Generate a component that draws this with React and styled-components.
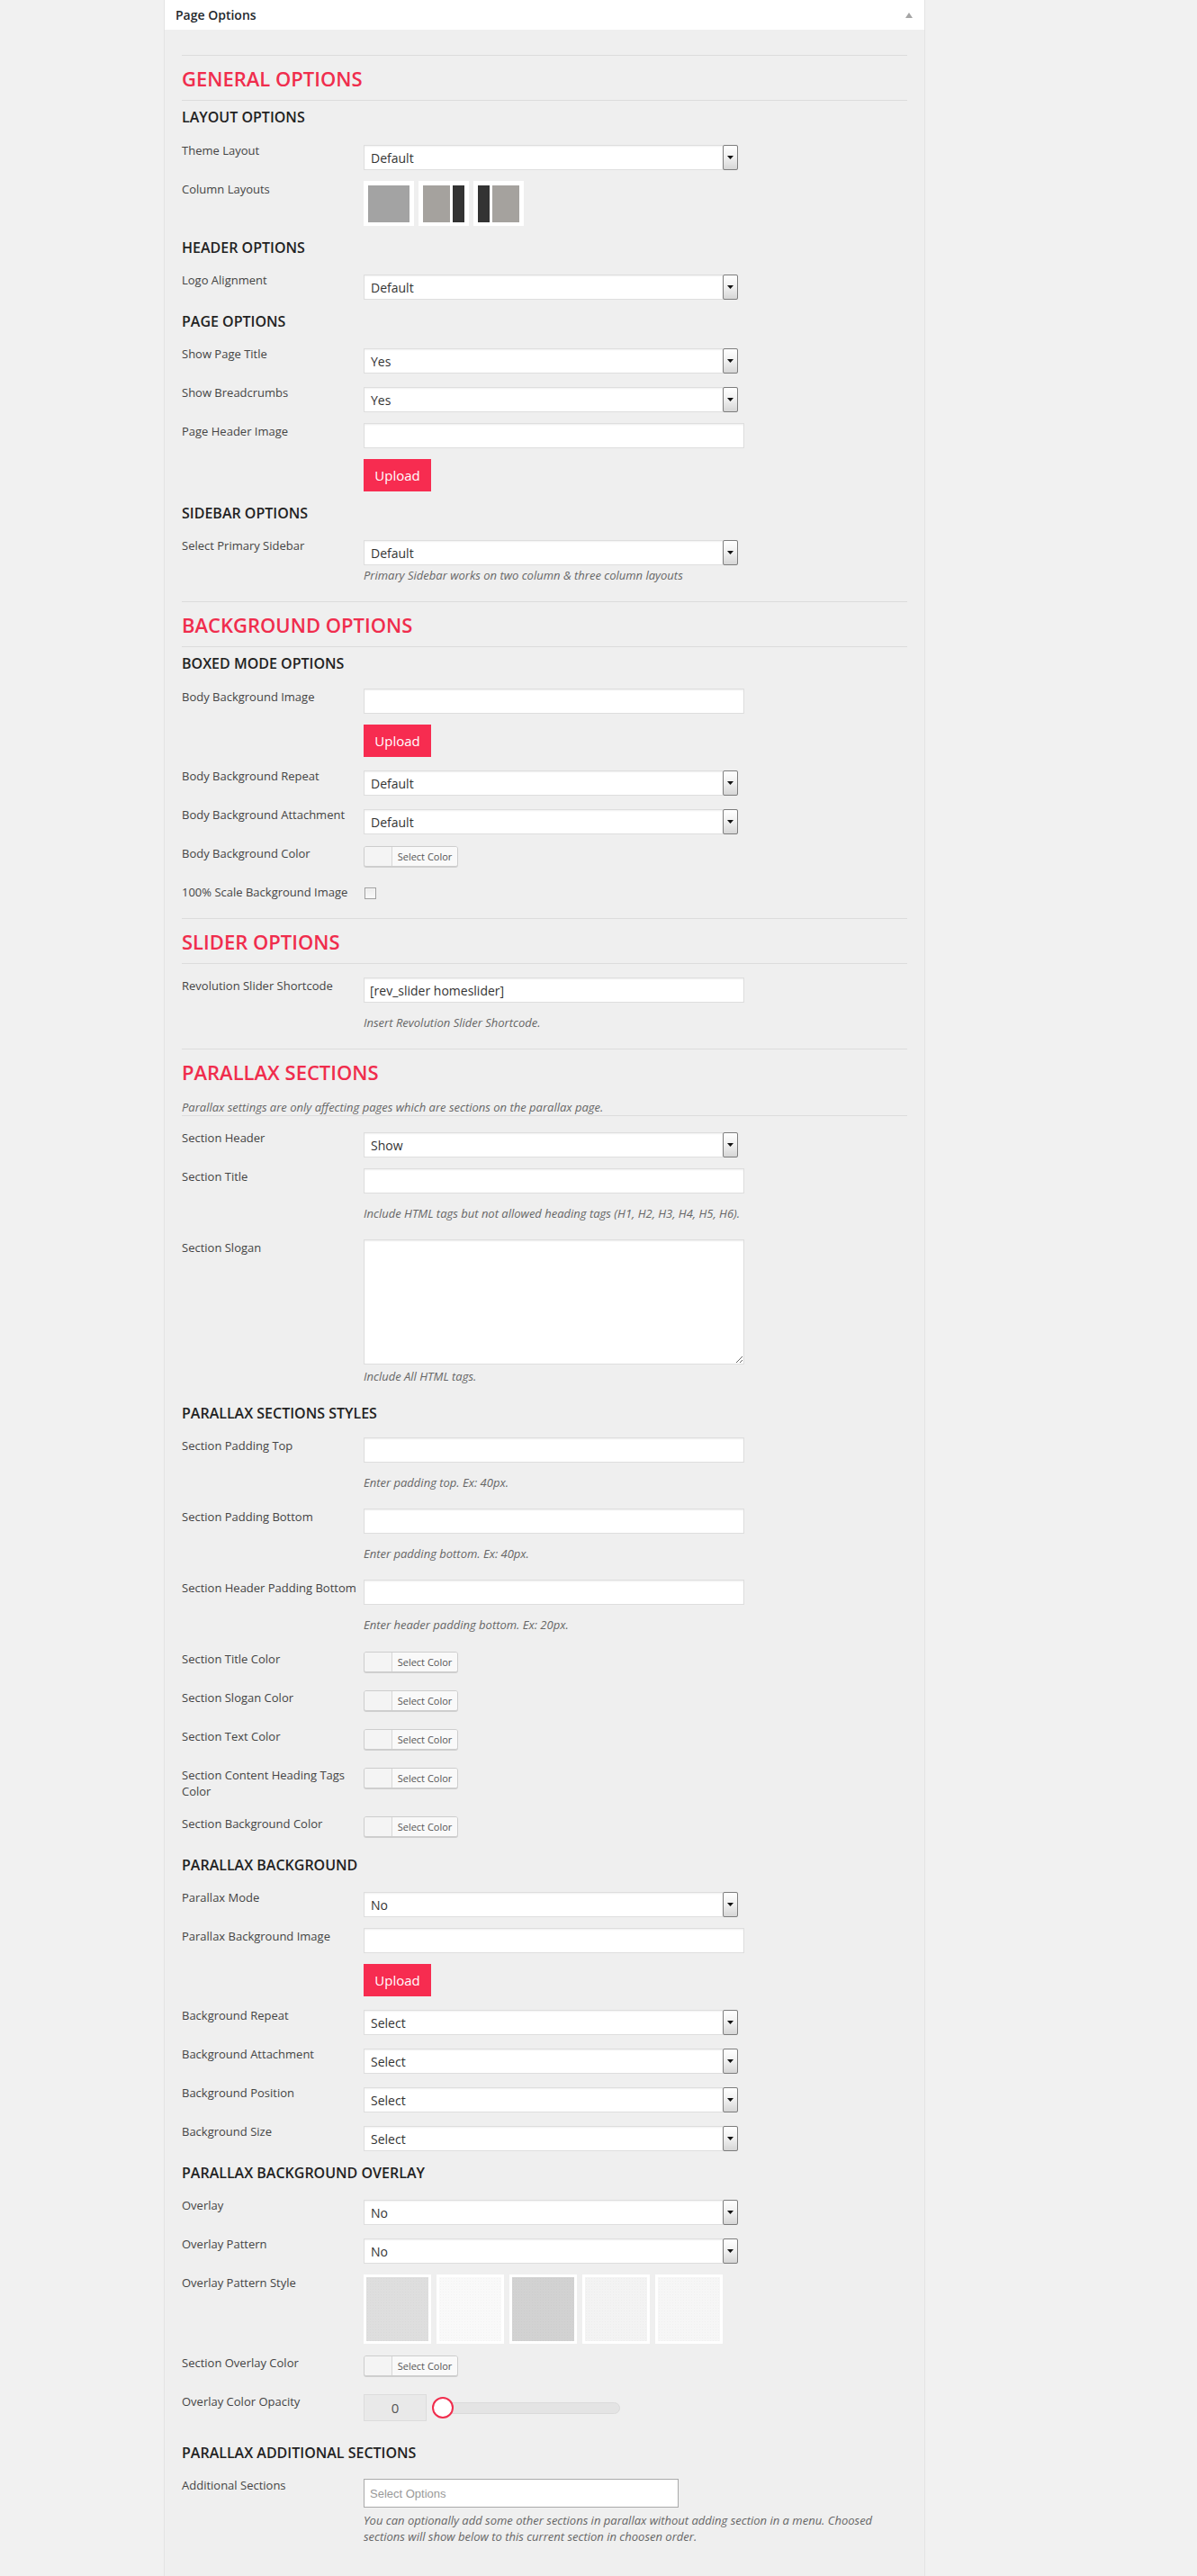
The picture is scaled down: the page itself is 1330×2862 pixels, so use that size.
import React from 'react';
import styled, { createGlobalStyle } from 'styled-components';

const GlobalStyle = createGlobalStyle`
  html, body { margin: 0; padding: 0; background: #f1f1f1; }
  body { font-family: "Open Sans", "Noto Sans", sans-serif; color: #444; }
  *, *::before, *::after { box-sizing: border-box; }
`;

const ACCENT = '#f02d4d';

const Page = styled.div`
  min-height: 2862px;
  padding-left: 182px;
  display: flex;
  align-items: stretch;
`;

const Panel = styled.section`
  width: 846px;
  background: #efefef;
  border-left: 1px solid #e3e3e3;
  border-right: 1px solid #e3e3e3;
  display: flex;
  flex-direction: column;
`;

const PanelHeader = styled.header`
  height: 33px;
  background: #fff;
  display: flex;
  align-items: center;
  justify-content: space-between;
  padding: 0 13px 0 12px;
  font-size: 14px;
  font-weight: 600;
  color: #23282d;
`;

const PanelBody = styled.div`
  flex: 1;
  padding: 28px 19px 17px;
`;

const SectionHead = styled.div`
  border-top: 1px solid #dcdcdc;
  border-bottom: 1px solid #dcdcdc;
  padding: 10px 0 ${(p) => (p.$desc ? 0 : 9)}px;
`;

const SectionTitle = styled.h2`
  margin: 0;
  font-size: 22px;
  line-height: 30px;
  font-weight: 600;
  color: ${ACCENT};
`;

const SectionDesc = styled.p`
  margin: 15px 0 0;
  font-size: 13px;
  line-height: 18px;
  font-style: italic;
  color: #666;
`;

const SectionBody = styled.div`
  padding-top: 15px;
`;

const GroupHeading = styled.h3`
  margin: 5px 0 15px;
  font-size: 16px;
  line-height: 24px;
  font-weight: 600;
  color: #222;
  &:first-child { margin-top: -9px; margin-bottom: 16px; }
`;

const Row = styled.div`
  display: flex;
  align-items: flex-start;
  margin-bottom: 12px;
`;

const Label = styled.label`
  flex: 0 0 202px;
  padding-right: 8px;
  margin-bottom: 6px;
  font-size: 13px;
  line-height: 18px;
  color: #444;
`;

const Control = styled.div`
  flex: 1;
  min-width: 0;
  display: flex;
  flex-direction: column;
  align-items: flex-start;
`;

const SelectBox = styled.div`
  width: 416px;
  height: 28px;
  margin-top: 3px;
  display: flex;
  align-items: center;
  background: #fff;
  border: 1px solid #dedede;
  border-right: none;
  box-shadow: inset 0 1px 2px rgba(0, 0, 0, 0.06);
  font-size: 14px;
  color: #333;
`;

const SelectValue = styled.span`
  flex: 1;
  padding-left: 7px;
`;

const SelectArrow = styled.span`
  width: 17px;
  height: 28px;
  margin: -1px 0;
  display: flex;
  align-items: center;
  justify-content: center;
  border: 1px solid #7d7d7d;
  border-radius: 2px;
  background: linear-gradient(#ffffff 0%, #f0f0f0 50%, #d6d6d6 100%);
`;

const TextInput = styled.input`
  width: 423px;
  height: 28px;
  margin: 0 0 11px;
  padding: 0 6px;
  background: #fff;
  border: 1px solid #dedede;
  box-shadow: inset 0 1px 2px rgba(0, 0, 0, 0.07);
  font-family: "Open Sans", "Noto Sans", sans-serif;
  font-size: 14px;
  color: #333;
  outline: none;
`;

const TextArea = styled.textarea`
  width: 423px;
  height: 139px;
  margin: 0 0 2px;
  padding: 6px;
  background: #fff;
  border: 1px solid #dedede;
  box-shadow: inset 0 1px 2px rgba(0, 0, 0, 0.07);
  font-family: "Open Sans", "Noto Sans", sans-serif;
  font-size: 14px;
  outline: none;
`;

const Helper = styled.p`
  margin: 2px 0 8px;
  font-size: 13px;
  line-height: 18px;
  font-style: italic;
  color: #666;
`;

const UploadButton = styled.button`
  width: 75px;
  height: 36px;
  margin-top: 1px;
  padding: 0;
  border: none;
  background: #f72c50;
  color: #fff;
  font-family: "Open Sans", "Noto Sans", sans-serif;
  font-size: 15px;
  cursor: pointer;
`;

const ColorButton = styled.div`
  width: 105px;
  height: 23px;
  margin: 1px 0 7px;
  display: flex;
  border: 1px solid #cdcdcd;
  border-radius: 3px;
  background: #f7f7f7;
  box-shadow: 0 1px 0 #cfcfcf;
  overflow: hidden;
`;

const ColorSwatch = styled.span`
  width: 31px;
  background: #f4f4f4;
  border-right: 1px solid #d6d6d6;
`;

const ColorText = styled.span`
  flex: 1;
  font-size: 11px;
  line-height: 21px;
  text-align: center;
  color: #555;
  background: #f9f9f9;
`;

const CheckBox = styled.span`
  width: 13px;
  height: 13px;
  margin: 4px 0 9px 1px;
  border: 1px solid #a0a0a0;
  background: linear-gradient(#ececec, #fafafa);
  box-shadow: inset 0 0 0 1px #f6f6f6;
`;

const TileRow = styled.div`
  display: flex;
  gap: ${(p) => p.$gap}px;
`;

const LayoutTile = styled.div`
  width: 56px;
  height: 50px;
  padding: 5px 5px 4px;
  background: #fff;
  display: flex;
  gap: 3px;
`;

const TilePart = styled.span`
  flex: ${(p) => (p.$w ? `0 0 ${p.$w}px` : 1)};
  background: ${(p) => p.$c};
`;

const PatternTile = styled.div`
  width: 75px;
  height: 77px;
  padding: 3px;
  background: #fff;
  display: flex;
`;

const PatternFill = styled.span`
  flex: 1;
  background-color: ${(p) => p.$c};
  background-image: radial-gradient(rgba(0, 0, 0, 0.025) 1px, transparent 1px);
  background-size: 3px 3px;
`;

const OpacityControl = styled.div`
  display: flex;
  align-items: center;
  gap: 6px;
  margin-top: 1px;
  padding-bottom: 11px;
`;

const OpacityValue = styled.div`
  width: 70px;
  height: 30px;
  background: #e9e9e9;
  border: 1px solid #dcdcdc;
  text-align: center;
  font-size: 15px;
  line-height: 28px;
  color: #555;
`;

const Slider = styled.div`
  position: relative;
  width: 209px;
  height: 24px;
  display: flex;
  align-items: center;
  padding-left: 10px;
`;

const SliderTrack = styled.div`
  flex: 1;
  height: 13px;
  border-radius: 7px;
  background: #e4e4e4;
  border: 1px solid #dadada;
`;

const SliderHandle = styled.span`
  position: absolute;
  left: 0;
  top: 0;
  width: 24px;
  height: 24px;
  border-radius: 50%;
  border: 2px solid ${ACCENT};
  background: #fff;
`;

const MultiSelect = styled.div`
  width: 350px;
  height: 32px;
  margin: 2px 0 3px;
  padding-left: 6px;
  display: flex;
  align-items: center;
  background: #fff;
  border: 1px solid #aaa;
  font-family: "Liberation Sans", Arial, sans-serif;
  font-size: 13px;
  color: #999;
`;

const Arrow = () => (
  <svg width="7" height="4" viewBox="0 0 7 4"><polygon points="0,0 7,0 3.5,4" fill="#111" /></svg>
);

const Select = ({ value }) => (
  <SelectBox>
    <SelectValue>{value}</SelectValue>
    <SelectArrow><Arrow /></SelectArrow>
  </SelectBox>
);

const Color = () => (
  <ColorButton>
    <ColorSwatch />
    <ColorText>Select Color</ColorText>
  </ColorButton>
);

const Field = ({ label, children }) => (
  <Row>
    <Label>{label}</Label>
    <Control>{children}</Control>
  </Row>
);

const Section = ({ title, desc, children }) => (
  <section>
    <SectionHead $desc={!!desc}>
      <SectionTitle>{title}</SectionTitle>
      {desc && <SectionDesc>{desc}</SectionDesc>}
    </SectionHead>
    <SectionBody>{children}</SectionBody>
  </section>
);

const patterns = ['#dedede', '#f9f9f9', '#d2d2d2', '#f3f3f3', '#f6f6f6'];

export default function App() {
  return (
    <>
      <GlobalStyle />
      <Page>
        <Panel>
          <PanelHeader>
            <span>Page Options</span>
            <svg width="8" height="6" viewBox="0 0 8 6"><polygon points="4,0 8,6 0,6" fill="#a5a5a5" /></svg>
          </PanelHeader>
          <PanelBody>
            <Section title="GENERAL OPTIONS">
              <GroupHeading>LAYOUT OPTIONS</GroupHeading>
              <Field label="Theme Layout"><Select value="Default" /></Field>
              <Field label="Column Layouts">
                <TileRow $gap={5}>
                  <LayoutTile><TilePart $c="#a3a3a3" /></LayoutTile>
                  <LayoutTile><TilePart $c="#a5a29e" /><TilePart $w={13} $c="#333" /></LayoutTile>
                  <LayoutTile><TilePart $w={13} $c="#333" /><TilePart $c="#a5a29e" /></LayoutTile>
                </TileRow>
              </Field>
              <GroupHeading>HEADER OPTIONS</GroupHeading>
              <Field label="Logo Alignment"><Select value="Default" /></Field>
              <GroupHeading>PAGE OPTIONS</GroupHeading>
              <Field label="Show Page Title"><Select value="Yes" /></Field>
              <Field label="Show Breadcrumbs"><Select value="Yes" /></Field>
              <Field label="Page Header Image">
                <TextInput type="text" readOnly value="" />
                <UploadButton type="button">Upload</UploadButton>
              </Field>
              <GroupHeading>SIDEBAR OPTIONS</GroupHeading>
              <Field label="Select Primary Sidebar">
                <Select value="Default" />
                <Helper>Primary Sidebar works on two column &amp; three column layouts</Helper>
              </Field>
            </Section>

            <Section title="BACKGROUND OPTIONS">
              <GroupHeading>BOXED MODE OPTIONS</GroupHeading>
              <Field label="Body Background Image">
                <TextInput type="text" readOnly value="" />
                <UploadButton type="button">Upload</UploadButton>
              </Field>
              <Field label="Body Background Repeat"><Select value="Default" /></Field>
              <Field label="Body Background Attachment"><Select value="Default" /></Field>
              <Field label="Body Background Color"><Color /></Field>
              <Field label="100% Scale Background Image"><CheckBox /></Field>
            </Section>

            <Section title="SLIDER OPTIONS">
              <Field label="Revolution Slider Shortcode">
                <TextInput type="text" readOnly value="[rev_slider homeslider]" />
                <Helper>Insert Revolution Slider Shortcode.</Helper>
              </Field>
            </Section>

            <Section
              title="PARALLAX SECTIONS"
              desc="Parallax settings are only affecting pages which are sections on the parallax page."
            >
              <Field label="Section Header"><Select value="Show" /></Field>
              <Field label="Section Title">
                <TextInput type="text" readOnly value="" />
                <Helper>Include HTML tags but not allowed heading tags (H1, H2, H3, H4, H5, H6).</Helper>
              </Field>
              <Field label="Section Slogan">
                <TextArea readOnly value="" />
                <Helper>Include All HTML tags.</Helper>
              </Field>

              <GroupHeading>PARALLAX SECTIONS STYLES</GroupHeading>
              <Field label="Section Padding Top">
                <TextInput type="text" readOnly value="" />
                <Helper>Enter padding top. Ex: 40px.</Helper>
              </Field>
              <Field label="Section Padding Bottom">
                <TextInput type="text" readOnly value="" />
                <Helper>Enter padding bottom. Ex: 40px.</Helper>
              </Field>
              <Field label="Section Header Padding Bottom">
                <TextInput type="text" readOnly value="" />
                <Helper>Enter header padding bottom. Ex: 20px.</Helper>
              </Field>
              <Field label="Section Title Color"><Color /></Field>
              <Field label="Section Slogan Color"><Color /></Field>
              <Field label="Section Text Color"><Color /></Field>
              <Field label="Section Content Heading Tags Color"><Color /></Field>
              <Field label="Section Background Color"><Color /></Field>

              <GroupHeading>PARALLAX BACKGROUND</GroupHeading>
              <Field label="Parallax Mode"><Select value="No" /></Field>
              <Field label="Parallax Background Image">
                <TextInput type="text" readOnly value="" />
                <UploadButton type="button">Upload</UploadButton>
              </Field>
              <Field label="Background Repeat"><Select value="Select" /></Field>
              <Field label="Background Attachment"><Select value="Select" /></Field>
              <Field label="Background Position"><Select value="Select" /></Field>
              <Field label="Background Size"><Select value="Select" /></Field>

              <GroupHeading>PARALLAX BACKGROUND OVERLAY</GroupHeading>
              <Field label="Overlay"><Select value="No" /></Field>
              <Field label="Overlay Pattern"><Select value="No" /></Field>
              <Field label="Overlay Pattern Style">
                <TileRow $gap={6}>
                  {patterns.map((c) => (
                    <PatternTile key={c}><PatternFill $c={c} /></PatternTile>
                  ))}
                </TileRow>
              </Field>
              <Field label="Section Overlay Color"><Color /></Field>
              <Field label="Overlay Color Opacity">
                <OpacityControl>
                  <OpacityValue>0</OpacityValue>
                  <Slider>
                    <SliderTrack />
                    <SliderHandle />
                  </Slider>
                </OpacityControl>
              </Field>

              <GroupHeading>PARALLAX ADDITIONAL SECTIONS</GroupHeading>
              <Field label="Additional Sections">
                <MultiSelect>Select Options</MultiSelect>
                <Helper>
                  You can optionally add some other sections in parallax without adding section in a menu. Choosed
                  <br />
                  sections will show below to this current section in choosen order.
                </Helper>
              </Field>
            </Section>
          </PanelBody>
        </Panel>
      </Page>
    </>
  );
}
